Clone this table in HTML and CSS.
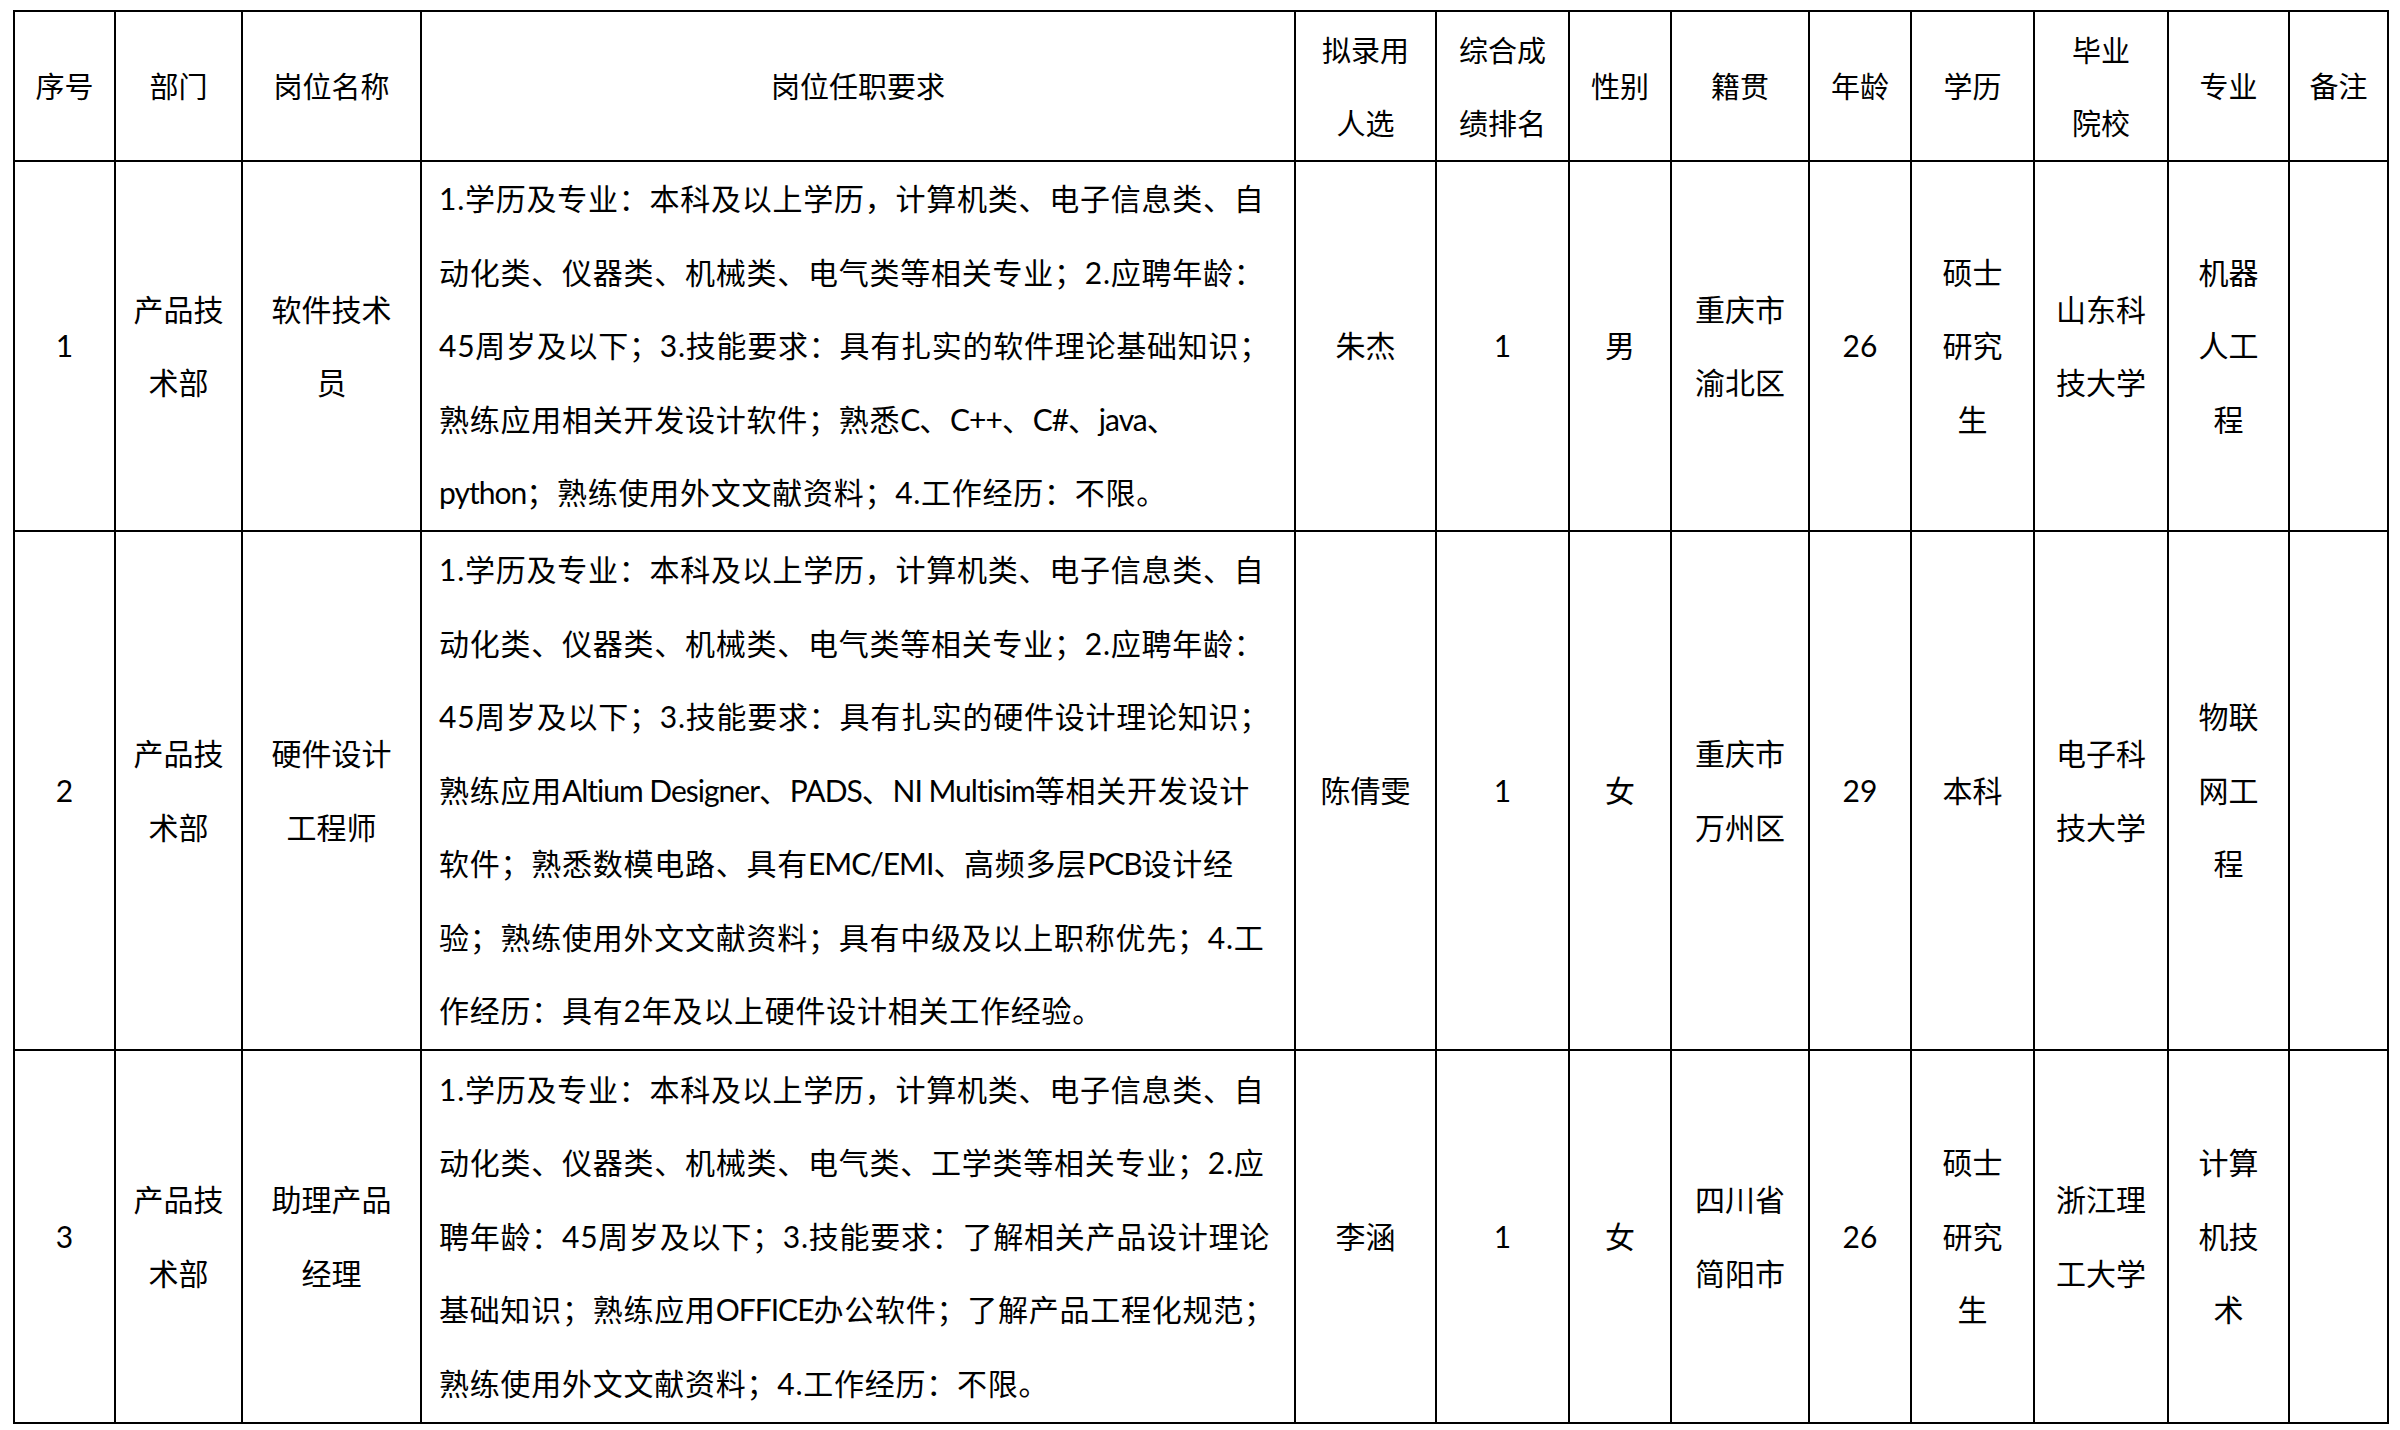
FILE: index.html
```html
<!DOCTYPE html>
<html lang="zh-CN">
<head>
<meta charset="utf-8">
<title>拟录用人选名单</title>
<link rel="stylesheet" href="styles.css">
</head>
<body>
<table class="roster">
  <colgroup>
    <col class="c-no">
    <col class="c-dept">
    <col class="c-post">
    <col class="c-req">
    <col class="c-name">
    <col class="c-rank">
    <col class="c-sex">
    <col class="c-home">
    <col class="c-age">
    <col class="c-edu">
    <col class="c-school">
    <col class="c-major">
    <col class="c-note">
  </colgroup>
  <thead>
    <tr class="head-row">
      <th>序号</th>
      <th>部门</th>
      <th>岗位名称</th>
      <th>岗位任职要求</th>
      <th>拟录用<br>人选</th>
      <th>综合成<br>绩排名</th>
      <th>性别</th>
      <th>籍贯</th>
      <th>年龄</th>
      <th>学历</th>
      <th>毕业<br>院校</th>
      <th>专业</th>
      <th>备注</th>
    </tr>
  </thead>
  <tbody>
    <tr class="row-1">
      <td>1</td>
      <td>产品技<br>术部</td>
      <td>软件技术<br>员</td>
      <td class="req">1.学历及专业：本科及以上学历，计算机类、电子信息类、自<br>动化类、仪器类、机械类、电气类等相关专业；2.应聘年龄：<br>45周岁及以下；3.技能要求：具有扎实的软件理论基础知识；<br>熟练应用相关开发设计软件；熟悉<span class="en">C</span>、<span class="en">C++</span>、<span class="en">C#</span>、<span class="en">java</span>、<br><span class="en">python</span>；熟练使用外文文献资料；4.工作经历：不限。</td>
      <td>朱杰</td>
      <td>1</td>
      <td>男</td>
      <td>重庆市<br>渝北区</td>
      <td>26</td>
      <td>硕士<br>研究<br>生</td>
      <td>山东科<br>技大学</td>
      <td>机器<br>人工<br>程</td>
      <td></td>
    </tr>
    <tr class="row-2">
      <td>2</td>
      <td>产品技<br>术部</td>
      <td>硬件设计<br>工程师</td>
      <td class="req">1.学历及专业：本科及以上学历，计算机类、电子信息类、自<br>动化类、仪器类、机械类、电气类等相关专业；2.应聘年龄：<br>45周岁及以下；3.技能要求：具有扎实的硬件设计理论知识；<br>熟练应用<span class="en">Altium Designer</span>、<span class="en">PADS</span>、<span class="en">NI Multisim</span>等相关开发设计<br>软件；熟悉数模电路、具有<span class="en">EMC/EMI</span>、高频多层<span class="en">PCB</span>设计经<br>验；熟练使用外文文献资料；具有中级及以上职称优先；4.工<br>作经历：具有2年及以上硬件设计相关工作经验。</td>
      <td>陈倩雯</td>
      <td>1</td>
      <td>女</td>
      <td>重庆市<br>万州区</td>
      <td>29</td>
      <td>本科</td>
      <td>电子科<br>技大学</td>
      <td>物联<br>网工<br>程</td>
      <td></td>
    </tr>
    <tr class="row-3">
      <td>3</td>
      <td>产品技<br>术部</td>
      <td>助理产品<br>经理</td>
      <td class="req">1.学历及专业：本科及以上学历，计算机类、电子信息类、自<br>动化类、仪器类、机械类、电气类、工学类等相关专业；2.应<br>聘年龄：45周岁及以下；3.技能要求：了解相关产品设计理论<br>基础知识；熟练应用<span class="en">OFFICE</span>办公软件；了解产品工程化规范；<br>熟练使用外文文献资料；4.工作经历：不限。</td>
      <td>李涵</td>
      <td>1</td>
      <td>女</td>
      <td>四川省<br>简阳市</td>
      <td>26</td>
      <td>硕士<br>研究<br>生</td>
      <td>浙江理<br>工大学</td>
      <td>计算<br>机技<br>术</td>
      <td></td>
    </tr>
  </tbody>
</table>
</body>
</html>
```

FILE: styles.css
```css
html, body {
  margin: 0;
  padding: 0;
  background: #ffffff;
}

body {
  padding: 10px 0 0 13px;
}

.roster {
  border-collapse: collapse;
  table-layout: fixed;
  width: 2376px;
  color: #000000;
  font-family: "Lato", "Noto Sans CJK SC", sans-serif;
}

.c-no { width: 101px; }
.c-dept { width: 127px; }
.c-post { width: 179px; }
.c-req { width: 874px; }
.c-name { width: 141px; }
.c-rank { width: 133px; }
.c-sex { width: 102px; }
.c-home { width: 138px; }
.c-age { width: 102px; }
.c-edu { width: 123px; }
.c-school { width: 134px; }
.c-major { width: 121px; }
.c-note { width: 99px; }

.roster th,
.roster td {
  border: 2px solid #000000;
  padding: 0 4px;
  text-align: center;
  vertical-align: middle;
  white-space: nowrap;
}

.roster th {
  font-family: "Noto Sans CJK SC", sans-serif;
  font-weight: 400;
  font-size: 29px;
  line-height: 73.5px;
}

.roster td {
  font-size: 30px;
  line-height: 73.5px;
}

.roster td.req {
  text-align: left;
  padding: 0 4px 0 17px;
  letter-spacing: 0.75px;
}

.roster td.req .en {
  letter-spacing: -1px;
}

.head-row { height: 150px; }
.row-1 { height: 370px; }
.row-2 { height: 519px; }
.row-3 { height: 373px; }
```
